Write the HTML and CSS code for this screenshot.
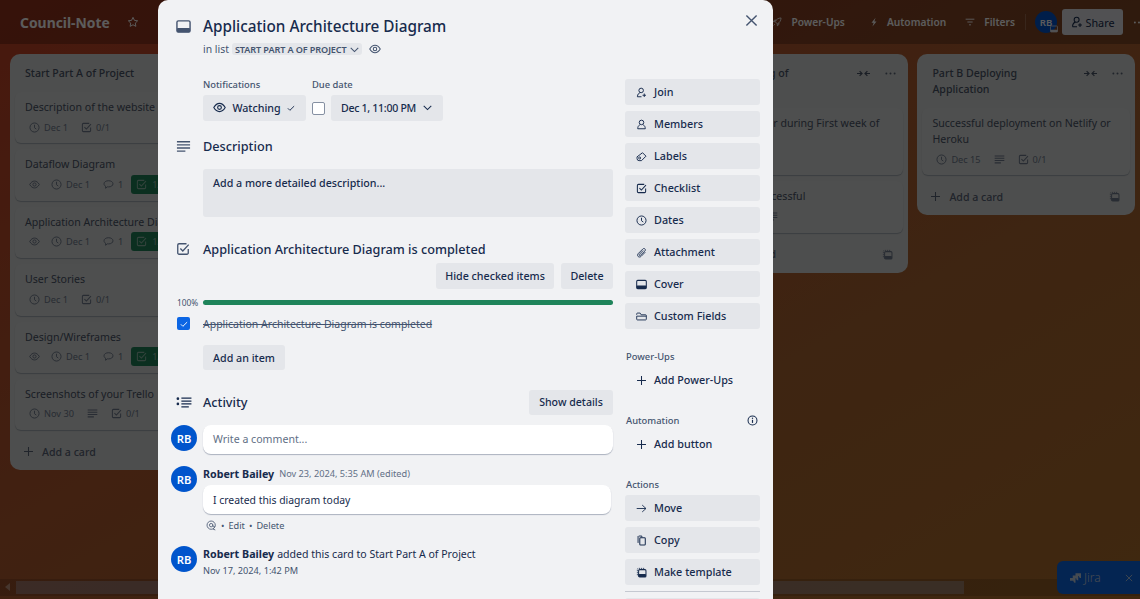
FILE: index.html
```html
<!DOCTYPE html>
<html lang="en">
<head>
<meta charset="utf-8">
<title>Application Architecture Diagram</title>
<link rel="stylesheet" href="styles.css">
</head>
<body>
<svg class="sprite" aria-hidden="true">
  <defs>
    <symbol id="i-eye" viewBox="0 0 16 16"><path d="M1 8c2-3.4 4.4-5 7-5s5 1.600 7 5c-2 3.400-4.400 5-7 5s-5-1.600-7-5z" fill="none" stroke="currentColor" stroke-width="1.400"/><circle cx="8" cy="8" r="2.300" fill="none" stroke="currentColor" stroke-width="1.400"/></symbol>
    <symbol id="i-clock" viewBox="0 0 16 16"><circle cx="8" cy="8" r="6.600" fill="none" stroke="currentColor" stroke-width="1.400"/><path d="M8 4v4.300l2.600 2" fill="none" stroke="currentColor" stroke-width="1.400"/></symbol>
    <symbol id="i-check" viewBox="0 0 16 16"><path d="M12 2H3.500A1.500 1.500 0 0 0 2 3.500V12.500A1.500 1.500 0 0 0 3.500 14H12.500A1.500 1.500 0 0 0 14 12.500V8" fill="none" stroke="currentColor" stroke-width="1.500"/><path d="M5 7.500l2.800 2.800L14.500 3" fill="none" stroke="currentColor" stroke-width="1.500"/></symbol>
    <symbol id="i-comment" viewBox="0 0 16 16"><path d="M8 2.500c3.800 0 6.500 1.900 6.500 4.500S11.800 11.500 8 11.500c-.6 0-1.200 0-1.700-.1L3.800 13.500V10.500C2.200 9.700 1.500 8.400 1.500 7c0-2.600 2.700-4.500 6.500-4.500z" fill="none" stroke="currentColor" stroke-width="1.400"/></symbol>
    <symbol id="i-lines" viewBox="0 0 16 16"><path d="M1 3h14M1 6.300h14M1 9.600h14M1 12.900h9" fill="none" stroke="currentColor" stroke-width="1.500"/></symbol>
    <symbol id="i-card" viewBox="0 0 16 16"><rect x="1" y="2" width="14" height="12" rx="1.500" fill="none" stroke="currentColor" stroke-width="1.500"/><rect x="1" y="9.500" width="14" height="4.500" rx="1" fill="currentColor"/></symbol>
    <symbol id="i-chev" viewBox="0 0 16 16"><path d="M2.500 5.500L8 11l5.500-5.500" fill="none" stroke="currentColor" stroke-width="1.500"/></symbol>
    <symbol id="i-tick" viewBox="0 0 16 16"><path d="M3 8.500l3.200 3.200L13 5" fill="none" stroke="currentColor" stroke-width="1.500"/></symbol>
    <symbol id="i-activity" viewBox="0 0 18 16"><circle cx="2" cy="3" r="1.500" fill="currentColor"/><circle cx="2" cy="9" r="1.500" fill="currentColor"/><path d="M6 2.500h11.500M6 5.800h11.500M6 9h11.500M6 12.500h8.500" fill="none" stroke="currentColor" stroke-width="1.400"/></symbol>
    <symbol id="i-close" viewBox="0 0 14 14"><path d="M1.500 1.500l11 11M12.500 1.500l-11 11" fill="none" stroke="currentColor" stroke-width="1.500"/></symbol>
    <symbol id="i-join" viewBox="0 0 16 16"><circle cx="7.500" cy="5" r="3.300" fill="none" stroke="currentColor" stroke-width="1.400"/><path d="M2 14.200c.3-3.800 2.200-5.700 4-5.700M2 14.200h6" fill="none" stroke="currentColor" stroke-width="1.400"/><path d="M12 9.500v5M9.500 12h5" fill="none" stroke="currentColor" stroke-width="1.400"/></symbol>
    <symbol id="i-user" viewBox="0 0 16 16"><circle cx="8" cy="5" r="3.300" fill="none" stroke="currentColor" stroke-width="1.400"/><path d="M5.500 8.500C3.500 9.500 2.500 11.500 2.500 14.200h11c0-2.700-1-4.700-3-5.700" fill="none" stroke="currentColor" stroke-width="1.400"/></symbol>
    <symbol id="i-tag" viewBox="0 0 16 16"><path d="M9.500 2.500l5 5-6.500 6.500H4.500A3 3 0 0 1 1.500 11V8.500z" fill="none" stroke="currentColor" stroke-width="1.400"/><circle cx="5.300" cy="10.200" r="1.500" fill="none" stroke="currentColor" stroke-width="1.300"/></symbol>
    <symbol id="i-clip" viewBox="0 0 16 16"><path d="M13.500 7.500l-6 6c-1.500 1.500-3.400 1.300-4.400.3s-1.200-2.900.3-4.400l6.500-6.500c1-1 2.300-.9 3.100-.1s.9 2.100-.1 3.100L6.500 12c-.5.500-1.200.5-1.600.1s-.4-1.100.1-1.600l5.500-5.500" fill="none" stroke="currentColor" stroke-width="1.300"/></symbol>
    <symbol id="i-fields" viewBox="0 0 16 16"><path d="M1 5.500V4.200C1 3.500 1.500 3 2.200 3H6l1.500 2.500H14c.6 0 1 .4 1 1V12c0 .6-.4 1-1 1H2c-.6 0-1-.4-1-1V7.500h14" fill="none" stroke="currentColor" stroke-width="1.300"/></symbol>
    <symbol id="i-plus" viewBox="0 0 16 16"><path d="M8 1.500v13M1.500 8h13" fill="none" stroke="currentColor" stroke-width="1.500"/></symbol>
    <symbol id="i-info" viewBox="0 0 16 16"><circle cx="8" cy="8" r="6.500" fill="none" stroke="currentColor" stroke-width="1.500"/><path d="M8 7v4.500" fill="none" stroke="currentColor" stroke-width="1.700"/><circle cx="8" cy="4.800" r="1" fill="currentColor"/></symbol>
    <symbol id="i-arrow" viewBox="0 0 16 16"><path d="M1 8h13.500M9 3l5.500 5L9 13" fill="none" stroke="currentColor" stroke-width="1.300"/></symbol>
    <symbol id="i-copy" viewBox="0 0 16 16"><path d="M4 1.500h4.500v2" fill="none" stroke="currentColor" stroke-width="1.400"/><path d="M3 1.500v10" fill="none" stroke="currentColor" stroke-width="1.400"/><rect x="5.500" y="4" width="8" height="10.500" rx="1.200" fill="none" stroke="currentColor" stroke-width="1.500"/></symbol>
    <symbol id="i-template" viewBox="0 0 16 16"><path d="M2 12V3.500C2 2.700 2.700 2 3.500 2H12" fill="none" stroke="currentColor" stroke-width="1.300" stroke-dasharray="1.600 1.300"/><rect x="3.800" y="3.800" width="10.700" height="10.700" rx="1.500" fill="none" stroke="currentColor" stroke-width="1.500"/><rect x="3.800" y="10" width="10.700" height="4.500" rx="1" fill="currentColor"/></symbol>
    <symbol id="i-star" viewBox="0 0 16 16"><path d="M8 1.800l1.900 4 4.300.6-3.100 3 .7 4.400L8 11.700l-3.800 2.100.7-4.400-3.100-3 4.300-.6z" fill="none" stroke="currentColor" stroke-width="1.300" stroke-linejoin="round"/></symbol>
    <symbol id="i-rocket" viewBox="0 0 16 16"><path d="M14.500 1.500c-4.500.2-7.500 2.300-9.500 6l3.500 3.500c3.700-2 5.800-5 6-9.500zM5 7.500H2l2-2.500h2.500M8.500 11v3l2.500-2V9.500M4.500 11.500l-2 2" fill="none" stroke="currentColor" stroke-width="1.300"/></symbol>
    <symbol id="i-bolt" viewBox="0 0 16 16"><path d="M10.500 1L4 9h3.500L5.500 15 12 7H8.500z" fill="currentColor"/></symbol>
    <symbol id="i-filter" viewBox="0 0 16 16"><path d="M1 3.500h14M3.800 8h8.400M6.500 12.500h3" fill="none" stroke="currentColor" stroke-width="1.500"/></symbol>
    <symbol id="i-collapse" viewBox="0 0 16 10"><path d="M0 5h5.500M3.200 2l3 3-3 3M16 5h-5.500M12.800 2l-3 3 3 3" fill="none" stroke="currentColor" stroke-width="1.500"/></symbol>
    <symbol id="i-dots" viewBox="0 0 16 4"><circle cx="2.500" cy="2" r="1.300" fill="currentColor"/><circle cx="8" cy="2" r="1.300" fill="currentColor"/><circle cx="13.500" cy="2" r="1.300" fill="currentColor"/></symbol>
    <symbol id="i-mention" viewBox="0 0 16 16"><circle cx="7.500" cy="7.500" r="6" fill="none" stroke="currentColor" stroke-width="1.200"/><circle cx="7.500" cy="7.500" r="2.500" fill="none" stroke="currentColor" stroke-width="1.200"/><path d="M10 7v1.500c0 1.800 2.500 1.800 3.300.5M10 13l3.500 1.500" fill="none" stroke="currentColor" stroke-width="1.200"/></symbol>
    <symbol id="i-jira" viewBox="0 0 16 14"><path d="M8 0h8v7c-2 0-3-1-3-3H8zM4 3.500h8v7c-2 0-3-1-3-3H4zM0 7h8v7c-2 0-3-1-3-3H0z" fill="currentColor"/></symbol>
  </defs>
</svg>

<div class="page">
  <header class="topbar">
    <span class="board-name">Council-Note</span>
    <svg class="tb-star"><use href="#i-star"/></svg>
    <span class="tb-spacer"></span>
    <svg class="tb-ic"><use href="#i-rocket"/></svg><span class="tb-link tb-power">Power-Ups</span>
    <svg class="tb-ic tb-bolt"><use href="#i-bolt"/></svg><span class="tb-link tb-auto">Automation</span>
    <svg class="tb-ic tb-filter"><use href="#i-filter"/></svg><span class="tb-link">Filters</span>
    <span class="tb-div"></span>
    <span class="tb-avatar">RB<svg class="tb-avatar-badge"><use href="#i-card"/></svg></span>
    <span class="tb-share"><svg class="tb-share-ic"><use href="#i-join"/></svg>Share</span>
    <svg class="tb-dots"><use href="#i-dots"/></svg>
  </header>

  <main class="board">
    <section class="list">
      <h2 class="list-title">Start Part A of Project</h2>
      <article class="bcard">
        <p>Description of the website</p>
        <div class="badges"><svg class="bi"><use href="#i-clock"/></svg><span>Dec 1</span><svg class="bi bi-gap"><use href="#i-check"/></svg><span>0/1</span></div>
      </article>
      <article class="bcard">
        <p>Dataflow Diagram</p>
        <div class="badges"><svg class="bi"><use href="#i-eye"/></svg><svg class="bi bi-after-eye"><use href="#i-clock"/></svg><span>Dec 1</span><svg class="bi bi-gap"><use href="#i-comment"/></svg><span>1</span><span class="done"><svg class="bi"><use href="#i-check"/></svg>1/1</span></div>
      </article>
      <article class="bcard">
        <p>Application Architecture Diagram</p>
        <div class="badges"><svg class="bi"><use href="#i-eye"/></svg><svg class="bi bi-after-eye"><use href="#i-clock"/></svg><span>Dec 1</span><svg class="bi bi-gap"><use href="#i-comment"/></svg><span>1</span><span class="done"><svg class="bi"><use href="#i-check"/></svg>1/1</span></div>
      </article>
      <article class="bcard">
        <p>User Stories</p>
        <div class="badges"><svg class="bi"><use href="#i-clock"/></svg><span>Dec 1</span><svg class="bi bi-gap"><use href="#i-check"/></svg><span>0/1</span></div>
      </article>
      <article class="bcard">
        <p>Design/Wireframes</p>
        <div class="badges"><svg class="bi"><use href="#i-eye"/></svg><svg class="bi bi-after-eye"><use href="#i-clock"/></svg><span>Dec 1</span><svg class="bi bi-gap"><use href="#i-comment"/></svg><span>1</span><span class="done"><svg class="bi"><use href="#i-check"/></svg>1/1</span></div>
      </article>
      <article class="bcard">
        <p>Screenshots of your Trello</p>
        <div class="badges"><svg class="bi"><use href="#i-clock"/></svg><span>Nov 30</span><svg class="bi bi-gap"><use href="#i-lines"/></svg><svg class="bi bi-gap"><use href="#i-check"/></svg><span>0/1</span></div>
      </article>
      <div class="add-card"><svg class="add-plus"><use href="#i-plus"/></svg><span>Add a card</span></div>
    </section>

    <section class="list list-hidden"></section>
    <section class="list list-hidden"></section>

    <section class="list">
      <div class="list-head">
        <h2 class="list-title">Part A Testing of Application</h2>
        <svg class="lh-collapse"><use href="#i-collapse"/></svg>
        <svg class="lh-dots"><use href="#i-dots"/></svg>
      </div>
      <article class="bcard">
        <p>Meet the tutor during First week of project</p>
        <div class="badges"><svg class="bi"><use href="#i-clock"/></svg><span>Dec 1</span></div>
      </article>
      <article class="bcard">
        <p>Testing is successful</p>
        <div class="badges"><svg class="bi"><use href="#i-clock"/></svg><span>Nov 30</span><svg class="bi bi-gap"><use href="#i-lines"/></svg></div>
      </article>
      <div class="add-card"><svg class="add-plus"><use href="#i-plus"/></svg><span>Add a card</span><svg class="add-tpl"><use href="#i-template"/></svg></div>
    </section>

    <section class="list">
      <div class="list-head">
        <h2 class="list-title">Part B Deploying Application</h2>
        <svg class="lh-collapse"><use href="#i-collapse"/></svg>
        <svg class="lh-dots"><use href="#i-dots"/></svg>
      </div>
      <article class="bcard">
        <p>Successful deployment on Netlify or Heroku</p>
        <div class="badges"><svg class="bi"><use href="#i-clock"/></svg><span>Dec 15</span><svg class="bi bi-gap"><use href="#i-lines"/></svg><svg class="bi bi-gap"><use href="#i-check"/></svg><span>0/1</span></div>
      </article>
      <div class="add-card"><svg class="add-plus"><use href="#i-plus"/></svg><span>Add a card</span><svg class="add-tpl"><use href="#i-template"/></svg></div>
    </section>
  </main>

  <div class="hscroll">
    <span class="hscroll-arrow"></span>
    <span class="hscroll-thumb"></span>
  </div>

  <div class="jira"><svg class="jira-ic"><use href="#i-jira"/></svg><span class="jira-name">Jira</span><svg class="jira-x"><use href="#i-close"/></svg></div>

  <div class="overlay">
    <div class="modal">
      <svg class="modal-close"><use href="#i-close"/></svg>
      <div class="m-main">
        <div class="row row-title">
          <svg class="row-ic"><use href="#i-card"/></svg>
          <h1 class="m-title">Application Architecture Diagram</h1>
        </div>
        <div class="in-list">
          <span>in list</span>
          <span class="chip">START PART A OF PROJECT<svg class="chip-ic"><use href="#i-chev"/></svg></span>
          <svg class="inlist-eye"><use href="#i-eye"/></svg>
        </div>

        <div class="meta">
          <div class="meta-col">
            <span class="label">Notifications</span>
            <span class="btn btn-watch"><svg class="btn-eye"><use href="#i-eye"/></svg>Watching<svg class="btn-tick"><use href="#i-tick"/></svg></span>
          </div>
          <div class="meta-col">
            <span class="label">Due date</span>
            <div class="due">
              <span class="box"></span>
              <span class="btn btn-date">Dec 1, 11:00 PM<svg class="btn-chev"><use href="#i-chev"/></svg></span>
            </div>
          </div>
        </div>

        <div class="row row-desc">
          <svg class="row-ic"><use href="#i-lines"/></svg>
          <h3 class="sec-title">Description</h3>
        </div>
        <div class="desc">Add a more detailed description...</div>

        <div class="row row-check">
          <svg class="row-ic row-ic-check"><use href="#i-check"/></svg>
          <h3 class="sec-title">Application Architecture Diagram is completed</h3>
        </div>
        <div class="check-actions">
          <span class="btn btn-hide">Hide checked items</span>
          <span class="btn btn-delete">Delete</span>
        </div>
        <div class="progress">
          <span class="pct">100%</span>
          <span class="bar"></span>
        </div>
        <div class="item">
          <span class="item-box"><svg class="item-tick"><use href="#i-tick"/></svg></span>
          <span class="item-text">Application Architecture Diagram is completed</span>
        </div>
        <span class="btn btn-add">Add an item</span>

        <div class="row row-activity">
          <svg class="row-ic row-ic-act"><use href="#i-activity"/></svg>
          <h3 class="sec-title sec-title-act">Activity</h3>
          <span class="btn btn-details">Show details</span>
        </div>

        <div class="act act-input">
          <span class="avatar">RB</span>
          <div class="comment comment-full placeholder">Write a comment...</div>
        </div>
        <div class="act act-comment">
          <span class="avatar">RB</span>
          <div class="act-body">
            <div class="act-line"><b>Robert Bailey</b><span class="when">Nov 23, 2024, 5:35 AM (edited)</span></div>
            <div class="comment comment-posted">I created this diagram today</div>
            <div class="act-tools"><svg class="mention"><use href="#i-mention"/></svg><span>•</span><span>Edit</span><span>•</span><span>Delete</span></div>
          </div>
        </div>
        <div class="act act-log">
          <span class="avatar">RB</span>
          <div class="act-body">
            <div class="act-line"><b>Robert Bailey</b><span>added this card to Start Part A of Project</span></div>
            <div class="act-sub">Nov 17, 2024, 1:42 PM</div>
          </div>
        </div>
      </div>

      <aside class="m-side">
        <span class="sbtn"><svg class="si"><use href="#i-join"/></svg>Join</span>
        <span class="sbtn"><svg class="si"><use href="#i-user"/></svg>Members</span>
        <span class="sbtn"><svg class="si"><use href="#i-tag"/></svg>Labels</span>
        <span class="sbtn"><svg class="si"><use href="#i-check"/></svg>Checklist</span>
        <span class="sbtn"><svg class="si"><use href="#i-clock"/></svg>Dates</span>
        <span class="sbtn"><svg class="si"><use href="#i-clip"/></svg>Attachment</span>
        <span class="sbtn"><svg class="si"><use href="#i-card"/></svg>Cover</span>
        <span class="sbtn"><svg class="si"><use href="#i-fields"/></svg>Custom Fields</span>

        <div class="side-label">Power-Ups</div>
        <span class="sbtn sbtn-plain"><svg class="si"><use href="#i-plus"/></svg>Add Power-Ups</span>
        <div class="side-label side-label-info">Automation<svg class="info"><use href="#i-info"/></svg></div>
        <span class="sbtn sbtn-plain"><svg class="si"><use href="#i-plus"/></svg>Add button</span>
        <div class="side-label side-label-actions">Actions</div>
        <span class="sbtn"><svg class="si"><use href="#i-arrow"/></svg>Move</span>
        <span class="sbtn"><svg class="si"><use href="#i-copy"/></svg>Copy</span>
        <span class="sbtn"><svg class="si"><use href="#i-template"/></svg>Make template</span>
        <hr class="side-rule">
        <span class="sbtn" aria-label="Archive"></span>
      </aside>
    </div>
  </div>
</div>
</body>
</html>
```
FILE: styles.css
```css
* { box-sizing: border-box; }
html, body { margin: 0; height: 100%; overflow: hidden; }
body { font-family: "Noto Sans", "Liberation Sans", sans-serif; color: #172b4d; font-size: 10.8px; }
.sprite { position: absolute; width: 0; height: 0; }
h1, h2, h3, p { margin: 0; }
svg { display: block; flex: none; }

.page { position: relative; width: 1140px; height: 599px; overflow: hidden; display: flex; flex-direction: column;
  background: linear-gradient(150deg, #c84428 0%, #b45a30 40%, #ac6632 65%, #b0702c 100%); }

/* top bar */
.topbar { height: 44px; flex: none; display: flex; align-items: center; padding: 0 0 0 20px; background: rgba(0,0,0,.25); color: #fff; }
.board-name { font-size: 13.9px; font-weight: 700; width: 89px; white-space: nowrap; }
.tb-star { width: 12px; height: 12px; margin-left: 18px; }
.tb-spacer { flex: 1; }
.tb-ic { width: 10px; height: 10px; }
.tb-link { font-size: 10.2px; font-weight: 600; white-space: nowrap; margin-left: 9px; }
.tb-power { margin-right: 24px; }
.tb-auto { margin-right: 19px; margin-left: 8px; }
.tb-div { width: 1px; height: 16px; background: rgba(255,255,255,.2); margin: 0 9px 0 10px; }
.tb-avatar { position: relative; width: 22px; height: 22px; border-radius: 50%; background: #0055cc; font-size: 9.6px; font-weight: 600; display: flex; align-items: center; justify-content: center; }
.tb-avatar-badge { position: absolute; right: -1px; bottom: 0; width: 8px; height: 8px; color: #dfe1e6; }
.tb-share { margin-left: 5px; width: 61px; height: 26px; border-radius: 3px; background: #dfe1e6; color: #172b4d; display: flex; align-items: center; justify-content: center; gap: 3px; font-size: 10.8px; }
.tb-share-ic { width: 12px; height: 12px; }
.tb-dots { width: 12px; height: 3px; margin-left: 10px; margin-right: -5px; }

/* board */
.board { flex: 1; display: flex; align-items: flex-start; gap: 9px; padding: 10px 0 0 10px; min-height: 0; color: #4a5568; }
.list { width: 218px; flex: none; background: #d6d8d7; border-radius: 10px; padding: 0 5px; display: flex; flex-direction: column; gap: 6px; }
.list-hidden { height: 220px; margin-right: -.3px; }
.list-title { font-size: 10.6px; line-height: 16px; font-weight: 500; padding: 11px 0 0 10px; height: 32px; }
.list-head { display: flex; align-items: flex-start; height: 48px; }
.list-head .list-title { width: 135px; height: auto; }
.lh-collapse { width: 13px; height: 9px; margin: 15px 0 0 27px; color: #4a5568; }
.lh-dots { width: 13px; height: 3px; margin: 18px 0 0 14px; color: #5a6577; }
.bcard { background: #d8dada; border-radius: 6px; box-shadow: 0 1px 1px rgba(9,30,66,.25); padding: 7px 10px 6.4px; }
.bcard p { font-size: 10.6px; line-height: 16px; }
.badges { display: flex; align-items: center; height: 20px; margin-left: 4px; margin-top: 2px; font-size: 9.2px; color: #6f7b8d; white-space: nowrap; }
.badges span { margin-left: 4px; }
.bi { width: 11px; height: 11px; }
.bi-gap { margin-left: 13px; }
.bi-after-eye { margin-left: 11px; }
.badges .done { display: inline-flex; align-items: center; gap: 5px; height: 19px; background: #1f845a; color: #8fb8a6; border-radius: 3px; padding: 0 5px; margin-left: 8px; }
.add-card { display: flex; align-items: center; height: 26px; padding: 0 8px; margin: 2.500px 0 5.500px; color: #5a6577; font-size: 10.6px; font-weight: 500; }
.add-plus { width: 11px; height: 11px; margin-right: 8px; }
.add-tpl { width: 11px; height: 11px; margin-left: auto; margin-right: 2px; color: #6f7b8d; }

/* bottom scrollbar */
.hscroll { position: relative; flex: none; height: 17px; margin-bottom: 3px; display: flex; align-items: center; background: rgba(0,0,0,.14); padding-left: 16px; }
.hscroll-thumb { display: block; width: 948px; height: 13px; background: rgba(180,180,200,.4); }
.hscroll-arrow { position: absolute; left: 5px; top: 4px; border: 4px solid transparent; border-left: 0; border-right: 5px solid #fff; opacity: .4; }

.jira { position: absolute; right: 0; bottom: 5px; width: 83px; height: 33px; background: #0c66e4; color: #c0cfe0; border-radius: 6px 0 0 6px; display: flex; align-items: center; padding-left: 13px; }
.jira-ic { width: 11px; height: 10px; }
.jira-name { margin-left: 3px; font-size: 12px; font-weight: 300; }
.jira-x { width: 8px; height: 8px; margin-left: auto; margin-right: 7px; }

/* overlay and modal */
.overlay { position: absolute; inset: 0; background: rgba(0,0,0,.64); display: flex; padding-left: 158px; }
.modal { position: relative; width: 615px; height: 700px; background: #f1f2f4; border-radius: 10px; display: flex; gap: 12px; padding-right: 13px; }
.modal-close { position: absolute; right: 15px; top: 14px; width: 13px; height: 13px; color: #44546f; }
.m-main { width: 455px; flex: none; display: flex; flex-direction: column; align-items: flex-start; }
.m-side { width: 135px; flex: none; padding-top: 79px; display: flex; flex-direction: column; gap: 6px; }

.row { display: flex; align-items: center; width: 100%; padding-left: 18px; }
.row-ic { width: 15px; height: 15px; margin-right: 12px; color: #44546f; }
.row-title { margin-top: 16px; height: 20px; }
.m-title { font-size: 15.3px; line-height: 20px; font-weight: 500; white-space: nowrap; }
.in-list { margin: 5px 0 0 45px; height: 16px; display: flex; align-items: center; color: #44546f; font-size: 10.4px; }
.chip { display: flex; align-items: center; margin-left: 3px; height: 12px; padding: 0 2px 0 3px; background: #e4e6ea; border-radius: 3px; font-size: 9.1px; font-weight: 600; white-space: nowrap; letter-spacing: -.1px; }
.chip-ic { width: 11px; height: 11px; margin-left: 2px; }
.inlist-eye { width: 12px; height: 12px; margin-left: 7px; }

.meta { display: flex; gap: 6px; margin: 22px 0 0 45px; }
.meta-col { display: flex; flex-direction: column; gap: 4px; }
.label { font-size: 9.4px; line-height: 12px; color: #44546f; font-weight: 500; }
.btn { display: flex; align-items: center; justify-content: center; height: 26px; padding: 0 0 1px; background: #e4e6ea; border-radius: 3px; font-size: 10.7px; font-weight: 500; white-space: nowrap; }
.btn-watch { width: 103px; }
.btn-eye { width: 13px; height: 13px; margin-right: 6px; }
.btn-tick { width: 10px; height: 10px; margin-left: 5px; }
.due { display: flex; align-items: center; gap: 6px; }
.box { width: 13px; height: 13px; background: #fff; border: 1px solid #8590a2; border-radius: 2px; }
.btn-date { width: 112px; font-size: 10.6px; letter-spacing: -.3px; }
.btn-chev { width: 11px; height: 11px; margin-left: 6px; }

.row-desc { margin-top: 15px; height: 20px; }
.sec-title { font-size: 12.7px; line-height: 20px; font-weight: 500; white-space: nowrap; }
.sec-title-act { margin-bottom: 2px; }
.desc { margin: 13px 0 0 45px; width: 410px; height: 48px; padding: 6px 10px; background: #e4e6ea; border-radius: 3px; font-size: 10.7px; line-height: 16px; font-weight: 500; }
.row-check { margin-top: 22px; height: 20px; }
.row-ic-check { width: 14px; height: 14px; margin-right: 13px; }
.check-actions { align-self: flex-end; display: flex; gap: 7px; margin-top: 4px; }
.btn-hide { width: 118px; }
.btn-delete { width: 52px; }
.progress { display: flex; align-items: center; margin-top: 7px; padding-left: 19px; height: 12px; width: 100%; }
.pct { font-size: 8.4px; width: 26px; color: #44546f; }
.bar { flex: 1; height: 5px; background: #1f845a; border-radius: 3px; }
.item { display: flex; align-items: center; height: 16px; margin-top: 8px; padding: 0 0 1px 19px; }
.item-box { width: 13px; height: 13px; background: #0c66e4; border-radius: 2px; color: #fff; display: flex; align-items: center; justify-content: center; margin-right: 13px; }
.item-tick { width: 10px; height: 10px; }
.item-text { font-size: 10.5px; color: #44546f; text-decoration: line-through; }
.btn-add { margin: 13px 0 0 45px; height: 25px; width: 82px; padding: 0; }
.row-activity { margin-top: 20px; height: 25px; }
.row-ic-act { width: 16px; height: 14px; margin-right: 11px; color: #172b4d; }
.btn-details { margin-left: auto; width: 84px; height: 25px; font-size: 10.6px; }

.act { display: flex; gap: 6px; padding-left: 13px; width: 100%; }
.act-input { margin-top: 10px; }
.act-comment { margin-top: 12px; }
.act-log { margin-top: 14px; }
.avatar { width: 26px; height: 26px; border-radius: 50%; background: #0055cc; color: #fff; font-size: 11.2px; font-weight: 600; display: flex; align-items: center; justify-content: center; flex: none; }
.comment { background: #fff; border-radius: 8px; box-shadow: 0 1px 1px rgba(9,30,66,.3); font-size: 10.4px; display: flex; align-items: center; padding: 0 0 0 10px; height: 29px; }
.comment-full { width: 410px; }
.placeholder { color: #626f86; font-size: 10.6px; padding-bottom: 1px; }
.comment-posted { width: 408px; margin-top: 3px; }
.act-body { flex: 1; min-width: 0; }
.act-line { display: flex; gap: 5px; height: 16px; line-height: 16px; font-size: 10.56px; white-space: nowrap; }
.act-log .act-line { gap: 3px; }
.act-line b { font-weight: 700; font-size: 10.7px; }
.when { font-size: 9.2px; color: #626f86; }
.act-tools { display: flex; align-items: center; gap: 4px; margin-top: 4px; height: 14px; padding-left: 3px; color: #44546f; font-size: 9.2px; }
.mention { width: 11px; height: 11px; }
.act-sub { font-size: 9.2px; color: #44546f; line-height: 16px; padding-top: 1px; }

.sbtn { display: flex; align-items: center; flex: none; height: 26px; padding: 0 0 2px 11px; background: #e4e6ea; border-radius: 3px; font-size: 10.8px; font-weight: 500; white-space: nowrap; }
.sbtn-plain { background: none; margin-top: -1px; }
.si { width: 11px; height: 11px; margin: 2px 7px 0 0; }
.side-label { font-size: 9.4px; line-height: 12px; height: 12px; padding: 1px 0 0 1px; color: #44546f; font-weight: 500; margin-top: 15px; }
.side-label-actions { margin-bottom: -1px; }
.side-label-info { display: flex; align-items: center; justify-content: space-between; padding-right: 2px; }
.info { width: 11px; height: 11px; color: #172b4d; }
.side-rule { width: 100%; height: 1px; border: 0; margin: 0; background: #c5c9d1; }
```
